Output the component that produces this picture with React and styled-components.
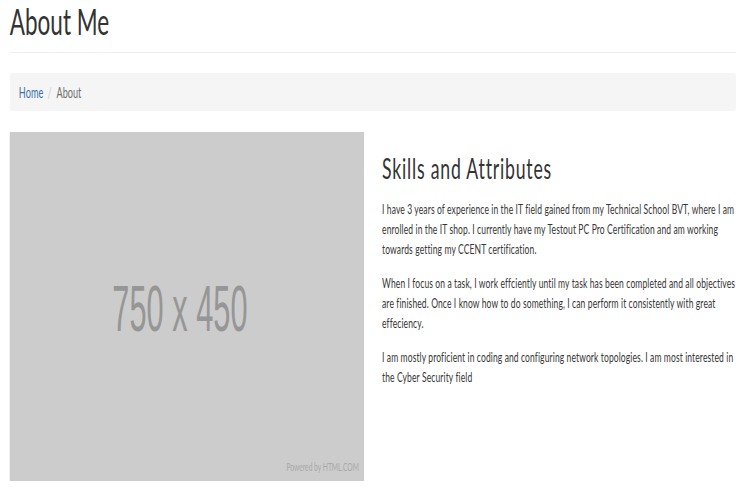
import React from "react";
import styled, { createGlobalStyle } from "styled-components";

const Global = createGlobalStyle`
  html, body {
    margin: 0;
    padding: 0;
    background: #ffffff;
    overflow: hidden;
  }
  body {
    font-family: Lato, "Open Sans", "Liberation Sans", sans-serif;
    font-size: 14px;
    line-height: 20px;
    color: #363636;
  }
`;

/* The reference was captured from a wide page squeezed horizontally */
const Stage = styled.div`
  width: 1232px;
  transform: scaleX(0.6088);
  transform-origin: 0 0;
`;

const Container = styled.div`
  width: 1193px;
  margin-left: 16px;
`;

const PageHeader = styled.h1`
  margin: 1px 0 0;
  padding-bottom: 10px;
  border-bottom: 1px solid #eeeeee;
  font-size: 37px;
  font-weight: 400;
  line-height: 1.1;
  color: #333333;
`;

const Breadcrumb = styled.nav`
  margin: 20px 0 21px;
  padding: 9px 15px;
  background: #f5f5f5;
  border-radius: 4px;
  display: flex;
  align-items: center;
  font-size: 15px;
  line-height: 20px;
`;

const Link = styled.a`
  color: #3a72b0;
  text-decoration: none;
`;

const Separator = styled.span`
  padding: 0 8px 0 7px;
  color: #cccccc;
`;

const Current = styled.span`
  color: #6f6f6f;
`;

const Row = styled.div`
  display: grid;
  grid-template-columns: 1fr 1fr;
  column-gap: 30px;
  align-items: start;
`;

const Placeholder = styled.div`
  position: relative;
  width: 100%;
  aspect-ratio: 750 / 450;
  background: #cccccc;
  display: flex;
  align-items: center;
  justify-content: center;
`;

const PlaceholderText = styled.span`
  display: inline-block;
  font-family: "Liberation Sans", Arial, sans-serif;
  font-size: 64px;
  line-height: 1;
  color: #969696;
  margin: 6px 22px 0 0;
  transform: scaleX(0.79);
`;

const Credit = styled.span`
  position: absolute;
  right: 8px;
  bottom: 7px;
  font-size: 11px;
  line-height: 14px;
  color: #a8a8a8;
`;

const Title = styled.h3`
  margin: 20px 0 15px;
  font-size: 29px;
  font-weight: 400;
  letter-spacing: 1.3px;
  line-height: 1.1;
  color: #333333;
`;

const Para = styled.p`
  margin: 0 0 14px;
  letter-spacing: 0.18px;
`;

export default function App() {
  return (
    <>
      <Global />
      <Stage>
        <Container>
          <PageHeader>About Me</PageHeader>
          <Breadcrumb>
            <Link href="#">Home</Link>
            <Separator>/</Separator>
            <Current>About</Current>
          </Breadcrumb>
          <Row>
            <Placeholder>
              <PlaceholderText>750 x 450</PlaceholderText>
              <Credit>Powered by HTML.COM</Credit>
            </Placeholder>
            <div>
              <Title>Skills and Attributes</Title>
              <Para>
                I have 3 years of experience in the IT field gained from my Technical School BVT, where I am
                enrolled in the IT shop. I currently have my Testout PC Pro Certification and am working
                towards getting my CCENT certification.
              </Para>
              <Para>
                When I focus on a task, I work effciently until my task has been completed and all objectives
                are finished. Once I know how to do something, I can perform it consistently with great
                effeciency.
              </Para>
              <Para>
                I am mostly proficient in coding and configuring network topologies. I am most interested in
                the Cyber Security field
              </Para>
            </div>
          </Row>
        </Container>
      </Stage>
    </>
  );
}
